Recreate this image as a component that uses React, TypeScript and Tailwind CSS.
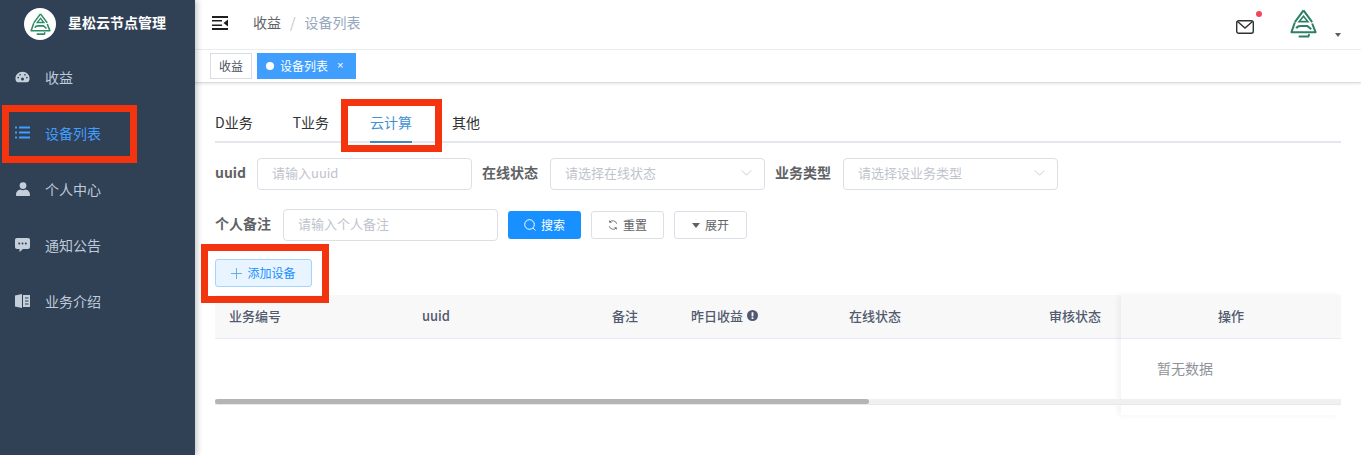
import React from "react";

const font = { fontFamily: '"Noto Sans CJK SC", "Noto Sans", sans-serif' };

function Tree({ className, color }: { className?: string; color: string }) {
  return (
    <svg viewBox="0 0 28 30" fill="none" stroke={color} strokeWidth="2.1" className={className}>
      <path d="M14 1.5 L5 13.5 M14 1.5 L23 13.5" />
      <path d="M14 7.5 L9.5 13 H18.5 Z" strokeWidth="1.7" />
      <path d="M5 14 L1.5 24 H26.5 L23 15" strokeLinejoin="round" />
      <path d="M6.5 20 Q7.5 17.5 11 17.5 H18 L22 21" />
      <path d="M9 28.5 H19 L20 26" />
    </svg>
  );
}

function Gauge() {
  return (
    <svg viewBox="0 0 16 12" className="w-[15px] h-[12px]" fill="#c5cfdc">
      <path d="M8 0.5 C3.6 0.5 0.5 3.8 0.5 7.5 C0.5 9 1 10.2 1.8 11 C2 11.3 2.4 11.5 2.8 11.5 H13.2 C13.6 11.5 14 11.3 14.2 11 C15 10.2 15.5 9 15.5 7.5 C15.5 3.8 12.4 0.5 8 0.5 Z" />
      <circle cx="8" cy="8" r="1.6" fill="#304055" />
      <circle cx="3.4" cy="6.6" r="0.9" fill="#304055" />
      <circle cx="5.4" cy="3.6" r="0.9" fill="#304055" />
      <circle cx="10.6" cy="3.6" r="0.9" fill="#304055" />
      <circle cx="12.6" cy="6.6" r="0.9" fill="#304055" />
    </svg>
  );
}

function ListIcon() {
  return (
    <svg viewBox="0 0 15 14" className="w-[15px] h-[14px]" fill="#409eff">
      <rect x="0" y="0.5" width="2" height="2" />
      <rect x="0" y="5.5" width="2" height="2" />
      <rect x="0" y="10.5" width="2" height="2" />
      <rect x="4" y="0.5" width="11" height="2" />
      <rect x="4" y="5.5" width="11" height="2" />
      <rect x="4" y="10.5" width="11" height="2" />
    </svg>
  );
}

function UserIcon() {
  return (
    <svg viewBox="0 0 14 14" className="w-[14px] h-[14px]" fill="#c5cfdc">
      <circle cx="7" cy="3.6" r="3.4" />
      <path d="M0 13 C0 9.5 2.5 7.8 4.5 7.6 C6 8.4 8 8.4 9.5 7.6 C11.5 7.8 14 9.5 14 13 C14 13.6 13.6 14 13 14 H1 C0.4 14 0 13.6 0 13 Z" />
    </svg>
  );
}

function ChatIcon() {
  return (
    <svg viewBox="0 0 15 14" className="w-[15px] h-[14px]" fill="#c5cfdc">
      <path d="M2 0 H13 C14.2 0 15 0.8 15 2 V9 C15 10.2 14.2 11 13 11 H8 L4.5 14 V11 H2 C0.8 11 0 10.2 0 9 V2 C0 0.8 0.8 0 2 0 Z" />
      <circle cx="4.2" cy="5.5" r="1" fill="#304055" />
      <circle cx="7.5" cy="5.5" r="1" fill="#304055" />
      <circle cx="10.8" cy="5.5" r="1" fill="#304055" />
    </svg>
  );
}

function BookIcon() {
  return (
    <svg viewBox="0 0 15 14" className="w-[15px] h-[14px]" fill="#c5cfdc">
      <path d="M0 1.5 L7 0 V14 L0 12.5 Z" />
      <path d="M8 1 H15 V13 H8 Z" />
      <path d="M10 4 H13.5 M10 7 H13.5 M10 10 H13.5" stroke="#304055" strokeWidth="1" />
    </svg>
  );
}

function Chevron() {
  return (
    <svg viewBox="0 0 12 7" fill="none" stroke="#c0c4cc" strokeWidth="1" className="w-[11px] h-[6px]">
      <path d="M0.5 0.5 L6 6 L11.5 0.5" />
    </svg>
  );
}

function MenuItem({ icon, label, active }: { icon: React.ReactNode; label: string; active?: boolean }) {
  return (
    <div className={`h-[56px] flex items-center pl-[15px] text-[14px] ${active ? "text-[#409eff]" : "text-[#bfcbd9]"}`}>
      <span className="w-[15px] flex justify-center">{icon}</span>
      <span className="ml-[15px]">{label}</span>
    </div>
  );
}

function Field({ label, w, labelW, children }: { label: string; w: string; labelW: string; children: React.ReactNode }) {
  return (
    <div className="flex items-center">
      <span className={`${labelW} pb-[3px] text-[14px] font-bold text-[#606266]`}>{label}</span>
      <div className={`${w} h-[32px] pb-[2px] bg-white border border-[#dcdfe6] rounded-[4px] flex items-center justify-between pl-[14px] pr-[12px] text-[13px] text-[#c0c4cc]`}>
        {children}
      </div>
    </div>
  );
}

function OutlineBtn({ icon, label }: { icon: React.ReactNode; label: string }) {
  return (
    <div className="w-[73px] h-[28px] bg-white border border-[#dcdfe6] rounded-[3px] flex items-center justify-center gap-[5px] text-[12px] text-[#606266]">
      {icon}
      <span>{label}</span>
    </div>
  );
}

function Head({ className, children }: { className: string; children: React.ReactNode }) {
  return <div className={`${className} pl-[14px] pb-[2px] flex items-center`}>{children}</div>;
}

export default function App() {
  return (
    <div style={font} className="relative w-[1361px] h-[455px] overflow-hidden bg-white flex">
      <aside className="w-[195px] shrink-0 bg-[#304055] shadow-[2px_0_6px_rgba(0,21,41,0.25)] z-10">
        <div className="h-[49px] pb-[1px] flex items-center pl-[24px]">
          <div className="w-[32px] h-[32px] rounded-full bg-white flex items-center justify-center">
            <Tree className="w-[21px] h-[24px]" color="#2f8a68" />
          </div>
          <span className="ml-[12px] pb-[3px] text-[14px] font-bold text-white">星松云节点管理</span>
        </div>
        <nav>
          <MenuItem icon={<Gauge />} label="收益" />
          <MenuItem icon={<ListIcon />} label="设备列表" active />
          <MenuItem icon={<UserIcon />} label="个人中心" />
          <MenuItem icon={<ChatIcon />} label="通知公告" />
          <MenuItem icon={<BookIcon />} label="业务介绍" />
        </nav>
      </aside>

      <main className="flex-1 flex flex-col min-w-0">
        <header className="h-[50px] pb-[4px] flex items-center pl-[17px] pr-[20px] border-b border-[#f0f0f0]">
          <svg viewBox="0 0 16 14" className="w-[16px] h-[14px]" fill="#1f1f1f">
            <rect x="0" y="0" width="16" height="2" />
            <rect x="0" y="4" width="10" height="1.5" />
            <rect x="0" y="8.5" width="10" height="1.5" />
            <rect x="0" y="12" width="16" height="2" />
            <path d="M16 3.5 V10.5 L11.5 7 Z" />
          </svg>
          <span className="ml-[25px] text-[14px] text-[#606266]">收益</span>
          <span className="ml-[9px] text-[14px] text-[#c0c4cc]">/</span>
          <span className="ml-[9px] text-[14px] text-[#97a8be]">设备列表</span>
          <div className="ml-auto flex items-center">
            <div className="relative w-[18px] h-[14px] mt-[9px]">
              <svg viewBox="0 0 18 14" fill="none" stroke="#303133" strokeWidth="1.4" className="w-[18px] h-[14px]">
                <rect x="0.7" y="0.7" width="16.6" height="12.6" rx="2" />
                <path d="M1.5 1.5 L9 8 L16.5 1.5" />
              </svg>
              <span className="absolute -top-[9px] left-[20px] w-[6px] h-[6px] rounded-full bg-[#f5455c]" />
            </div>
            <Tree className="ml-[36px] w-[27px] h-[29px] mt-[1px]" color="#2f7f64" />
            <span className="ml-[18px] mt-[24px] w-0 h-0 border-x-[3.5px] border-x-transparent border-t-[4px] border-t-[#5a5e66]" />
          </div>
        </header>

        <div className="h-[33px] flex items-center gap-[5px] pl-[15px] pb-[1px] border-b border-[#d8dce5] shadow-[0_1px_3px_rgba(0,0,0,0.1)]">
          <div className="w-[42px] h-[26px] bg-white border border-[#d8dce5] flex items-center justify-center text-[12px] text-[#495060]">收益</div>
          <div className="w-[99px] h-[26px] bg-[#409eff] flex items-center pl-[9px] text-[12px] text-white">
            <span className="w-[8px] h-[8px] rounded-full bg-white" />
            <span className="ml-[6px]">设备列表</span>
            <span className="ml-[9px] text-[11px] leading-none font-['Liberation_Sans']">×</span>
          </div>
        </div>

        <section className="pl-[20px] pr-[20px] pt-[20px]">
          <div className="h-[40px] flex border-b-2 border-[#e4e7ed] text-[14px] text-[#303133]">
            <div className="pr-[40px] h-full flex items-center">D业务</div>
            <div className="pr-[41px] h-full flex items-center">T业务</div>
            <div className="pr-[40px] h-[40px] flex items-center">
              <span className="h-[40px] flex items-center border-b-2 border-[#3f8ac0] text-[#3f92d2] text-[14px]">云计算</span>
            </div>
            <div className="h-full flex items-center">其他</div>
          </div>

          <div className="mt-[15px] flex items-center gap-[10px]">
            <Field label="uuid" labelW="w-[42px]" w="w-[215px]">
              <span>请输入uuid</span>
            </Field>
            <Field label="在线状态" labelW="w-[68px]" w="w-[215px]">
              <span>请选择在线状态</span>
              <Chevron />
            </Field>
            <Field label="业务类型" labelW="w-[68px]" w="w-[215px]">
              <span>请选择设业务类型</span>
              <Chevron />
            </Field>
          </div>

          <div className="mt-[19px] flex items-center gap-[10px]">
            <Field label="个人备注" labelW="w-[68px]" w="w-[215px]">
              <span>请输入个人备注</span>
            </Field>
            <div className="w-[73px] h-[28px] bg-[#1890ff] rounded-[3px] flex items-center justify-center gap-[5px] text-[12px] text-white">
              <svg viewBox="0 0 12 12" fill="none" stroke="#ffffff" strokeWidth="1" className="w-[12px] h-[12px]">
                <circle cx="5.5" cy="5.5" r="4.8" />
                <path d="M9 9 L11.5 11.5" />
              </svg>
              <span>搜索</span>
            </div>
            <OutlineBtn
              label="重置"
              icon={
                <svg viewBox="0 0 12 12" fill="none" stroke="#606266" strokeWidth="1" className="w-[10px] h-[10px]">
                  <path d="M10.5 4.5 A5 5 0 0 0 2 2.5 M1.5 7.5 A5 5 0 0 0 10 9.5" />
                  <path d="M2 0.5 V2.8 H4.3 M10 11.5 V9.2 H7.7" />
                </svg>
              }
            />
            <OutlineBtn
              label="展开"
              icon={<span className="w-0 h-0 border-x-[4px] border-x-transparent border-t-[5px] border-t-[#606266]" />}
            />
          </div>

          <div className="mt-[18px] w-[97px] h-[28px] bg-[#e8f4ff] border border-[#a3d3ff] rounded-[3px] flex items-center justify-center gap-[5px] text-[12px] text-[#1890ff]">
            <svg viewBox="0 0 12 12" stroke="#5aa9e6" strokeWidth="1" className="w-[11px] h-[11px]">
              <path d="M6 0 V12 M0 6 H12" />
            </svg>
            <span>添加设备</span>
          </div>

          <div className="relative mt-[8px]">
            <div className="h-[44px] flex bg-[#f8f8f9] border-b border-[#e6ebf5] text-[13px] font-medium text-[#515a6e]">
              <Head className="w-[193px]">业务编号</Head>
              <Head className="w-[190px]">uuid</Head>
              <Head className="w-[79px]">备注</Head>
              <Head className="w-[158px]">
                昨日收益
                <svg viewBox="0 0 12 12" className="ml-[4px] w-[11px] h-[11px]">
                  <circle cx="6" cy="6" r="6" fill="#515a6e" />
                  <rect x="5" y="2.5" width="2" height="4.5" fill="#ffffff" />
                  <rect x="5" y="8" width="2" height="1.8" fill="#ffffff" />
                </svg>
              </Head>
              <Head className="w-[200px]">在线状态</Head>
              <Head className="w-[86px]">审核状态</Head>
            </div>
            <div className="h-[60px]" />

            <div className="absolute top-0 right-0 w-[220px] h-[120px] bg-white shadow-[-3px_0_6px_rgba(0,0,0,0.05)]">
              <div className="h-[44px] pb-[2px] bg-[#f8f8f9] border-b border-[#e6ebf5] flex items-center justify-center text-[13px] font-medium text-[#515a6e]">操作</div>
              <div className="h-[60px] pb-[2px] pl-[36px] flex items-center text-[14px] text-[#909399]">暂无数据</div>
            </div>

            <div className="relative h-[6px] bg-[#f0f0f0] border-b border-[#e8e8e8]">
              <div className="w-[654px] h-[5px] bg-[#b4b4b4] rounded-full" />
            </div>
          </div>
        </section>
      </main>

      {/* red annotation frames drawn over the screenshot */}
      <div className="absolute z-20 left-[2px] top-[105px] w-[135px] h-[58px] border-[7px] border-[#f4330f]" />
      <div className="absolute z-20 left-[341px] top-[99px] w-[101px] h-[53px] border-[7px] border-[#f4330f]" />
      <div className="absolute z-20 left-[201px] top-[244px] w-[128px] h-[59px] border-[7px] border-[#f4330f]" />
    </div>
  );
}
